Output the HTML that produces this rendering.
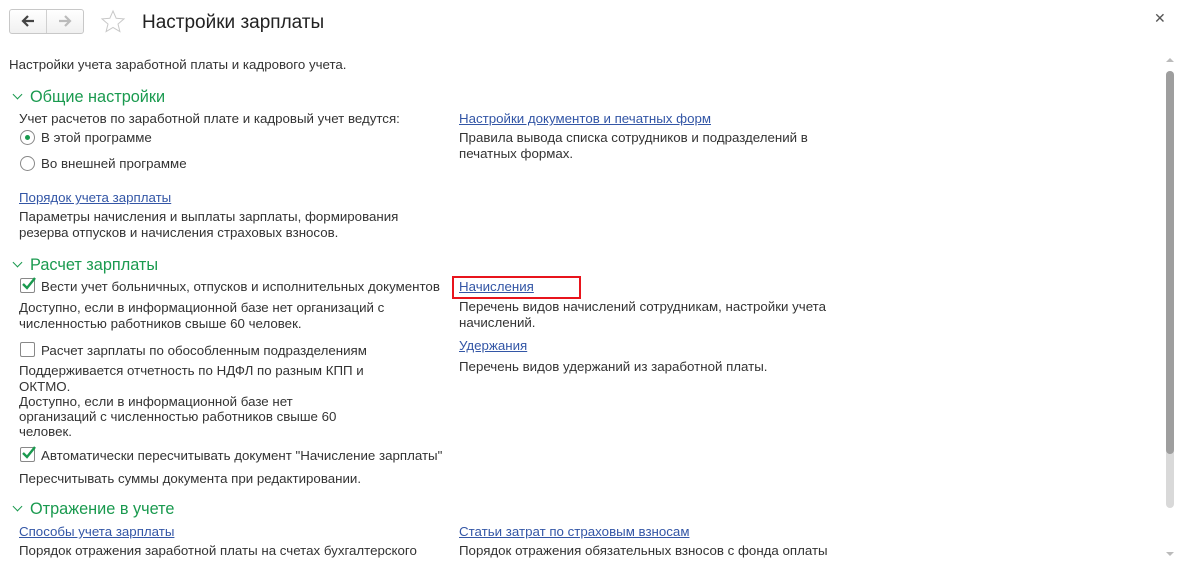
<!DOCTYPE html><html><head><meta charset="utf-8"><style>
body{margin:0;width:1183px;height:563px;background:#fff;font-family:"Liberation Sans",Arial,sans-serif;font-size:13.3px;color:#333;position:relative;overflow:hidden}
.t{position:absolute;white-space:nowrap;line-height:16px;margin-top:1px}
.h{position:absolute;font-size:16.3px;color:#1a9a4f;line-height:20px;white-space:nowrap}
.h:before{content:"";position:absolute;left:-16px;top:4px;width:6px;height:6px;border-right:1.3px solid #1a9a4f;border-bottom:1.3px solid #1a9a4f;transform:rotate(45deg)}
a{color:#3356a6;text-decoration:underline}
.cb{position:absolute;width:13px;height:13px;border:1px solid #888;border-radius:2px;background:#fff}
.rb{position:absolute;width:13px;height:13px;border:1px solid #888;border-radius:50%;background:#fff}
</style></head><body>
<div style="position:absolute;left:9px;top:9px;width:73px;height:23px;border:1px solid #c8c8c8;border-radius:3px;background:linear-gradient(#fff,#f0f0f0)"></div>
<div style="position:absolute;left:46px;top:10px;width:1px;height:23px;background:#d0d0d0"></div>
<svg style="position:absolute;left:20px;top:14px" width="16" height="14"><path d="M14 7H3M8 2L3 7l5 5" stroke="#444" stroke-width="2.2" fill="none"/></svg>
<svg style="position:absolute;left:57px;top:14px" width="16" height="14"><path d="M2 7h11M8 2l5 5-5 5" stroke="#bbb" stroke-width="2.2" fill="none"/></svg>
<svg style="position:absolute;left:100px;top:9px" width="26" height="24"><path d="M13 2l3.2 7.3 7.8.6-6 5.1 1.9 7.6L13 18.5 6.1 22.6 8 15 2 9.9l7.8-.6z" fill="none" stroke="#c8c8c8" stroke-width="1"/></svg>
<div class="t" style="left:142px;top:10px;font-size:19px;line-height:24px;color:#222">Настройки зарплаты</div>
<div class="t" style="left:1154px;top:9px;font-size:14px;color:#555">✕</div>
<div class="t" style="left:9px;top:56px">Настройки учета заработной платы и кадрового учета.</div>
<div class="h" style="left:30px;top:87px">Общие настройки</div>
<div class="t" style="left:19px;top:110px">Учет расчетов по заработной плате и кадровый учет ведутся:</div>
<div class="rb" style="left:20px;top:130px"></div><div style="position:absolute;left:25px;top:135px;width:5px;height:5px;border-radius:50%;background:#1a9a4f"></div>
<div class="t" style="left:41px;top:129px">В этой программе</div>
<div class="rb" style="left:20px;top:156px"></div>
<div class="t" style="left:41px;top:155px">Во внешней программе</div>
<div class="t" style="left:19px;top:189px"><a>Порядок учета зарплаты</a></div>
<div class="t" style="left:19px;top:208px">Параметры начисления и выплаты зарплаты, формирования</div>
<div class="t" style="left:19px;top:224px">резерва отпусков и начисления страховых взносов.</div>
<div class="t" style="left:459px;top:110px"><a>Настройки документов и печатных форм</a></div>
<div class="t" style="left:459px;top:129px">Правила вывода списка сотрудников и подразделений в</div>
<div class="t" style="left:459px;top:145px">печатных формах.</div>
<div class="h" style="left:30px;top:255px">Расчет зарплаты</div>
<div class="cb" style="left:20px;top:278px"></div><svg style="position:absolute;left:21px;top:276px" width="16" height="15"><path d="M2 8l4 4 8-10" stroke="#1a9a4f" stroke-width="2.4" fill="none"/></svg>
<div class="t" style="left:41px;top:278px">Вести учет больничных, отпусков и исполнительных документов</div>
<div class="t" style="left:19px;top:299px">Доступно, если в информационной базе нет организаций с</div>
<div class="t" style="left:19px;top:315px">численностью работников свыше 60 человек.</div>
<div class="cb" style="left:20px;top:342px"></div>
<div class="t" style="left:41px;top:342px">Расчет зарплаты по обособленным подразделениям</div>
<div class="t" style="left:19px;top:362px">Поддерживается отчетность по НДФЛ по разным КПП и</div>
<div class="t" style="left:19px;top:378px">ОКТМО.</div>
<div class="t" style="left:19px;top:393px">Доступно, если в информационной базе нет</div>
<div class="t" style="left:19px;top:408px">организаций с численностью работников свыше 60</div>
<div class="t" style="left:19px;top:423px">человек.</div>
<div class="cb" style="left:20px;top:447px"></div><svg style="position:absolute;left:21px;top:445px" width="16" height="15"><path d="M2 8l4 4 8-10" stroke="#1a9a4f" stroke-width="2.4" fill="none"/></svg>
<div class="t" style="left:41px;top:447px">Автоматически пересчитывать документ "Начисление зарплаты"</div>
<div class="t" style="left:19px;top:470px">Пересчитывать суммы документа при редактировании.</div>
<div style="position:absolute;left:452px;top:276px;width:125px;height:19px;border:2px solid #e8141c"></div>
<div class="t" style="left:459px;top:278px"><a>Начисления</a></div>
<div class="t" style="left:459px;top:298px">Перечень видов начислений сотрудникам, настройки учета</div>
<div class="t" style="left:459px;top:314px">начислений.</div>
<div class="t" style="left:459px;top:337px"><a>Удержания</a></div>
<div class="t" style="left:459px;top:358px">Перечень видов удержаний из заработной платы.</div>
<div class="h" style="left:30px;top:499px">Отражение в учете</div>
<div class="t" style="left:19px;top:523px"><a>Способы учета зарплаты</a></div>
<div class="t" style="left:19px;top:542px">Порядок отражения заработной платы на счетах бухгалтерского</div>
<div class="t" style="left:459px;top:523px"><a>Статьи затрат по страховым взносам</a></div>
<div class="t" style="left:459px;top:542px">Порядок отражения обязательных взносов с фонда оплаты</div>
<svg style="position:absolute;left:1165px;top:57px" width="10" height="6"><path d="M1 5L5 1 9 5z" fill="#bbb"/></svg>
<div style="position:absolute;left:1166px;top:71px;width:8px;height:437px;border-radius:4px;background:#d9d9d9"></div>
<div style="position:absolute;left:1166px;top:71px;width:8px;height:383px;border-radius:4px;background:#9e9e9e"></div>
<svg style="position:absolute;left:1165px;top:551px" width="10" height="6"><path d="M1 1L5 5 9 1z" fill="#bbb"/></svg>
</body></html>
